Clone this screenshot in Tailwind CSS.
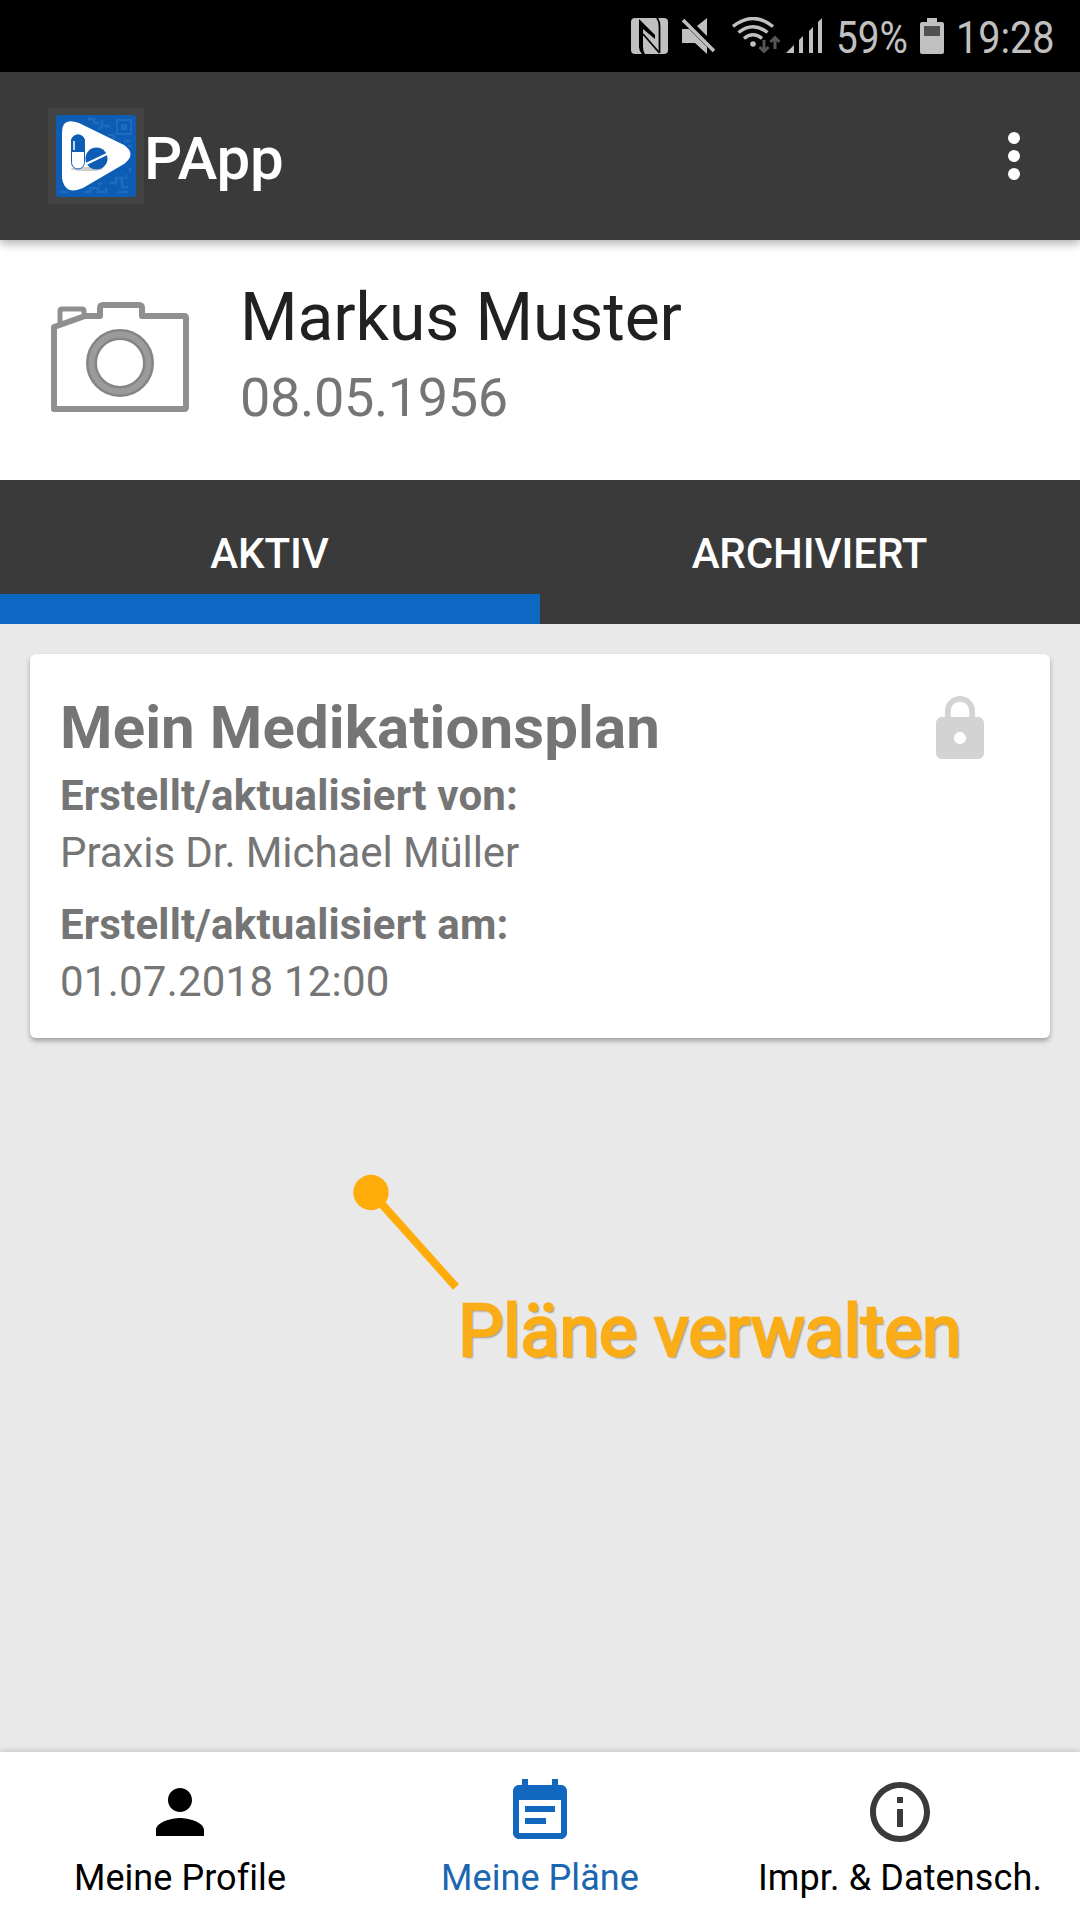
<!DOCTYPE html>
<html lang="de">
<head>
    <meta charset="UTF-8">
    <meta name="viewport" content="width=device-width, initial-scale=1.0">
    <title>PApp</title>

    <!-- Tailwind CSS -->
    <script src="https://cdn.jsdelivr.net/npm/@tailwindcss/browser@4"></script>
</head>
<body class="w-[1080px] h-[1920px] flex flex-col overflow-hidden bg-[#e9e9e9] font-['Roboto',sans-serif]">

    <!-- Status Bar -->
    <div class="h-[72px] shrink-0 bg-black text-[#c0c0c0] flex items-start pl-[631px]">
        <!-- NFC -->
        <svg class="w-[37px] h-9 mt-[18px]" viewBox="0 0 37 36">
            <rect width="37" height="36" rx="4" fill="#c0c0c0"/>
            <path d="M8 1L24 17V21L12 11V29Q12 33 14 36H11Q8 33 8 29Z" fill="#000"/>
            <path d="M12 16L28.500 35M26 0Q28.500 3 28.500 8V35" fill="none" stroke="#000" stroke-width="1.800"/>
        </svg>
        <!-- Mute -->
        <svg class="w-[34px] h-9 mt-[18px] ml-[14px]" viewBox="0 0 34 36">
            <path d="M0 11H7L25 29V36L13 25H0ZM25 0V18L15 8Z" fill="#c0c0c0"/>
            <path d="M1 2L32 33" stroke="#c0c0c0" stroke-width="3.500"/>
        </svg>
        <!-- Wifi -->
        <svg class="w-12 h-9 mt-[17px] ml-4" viewBox="0 0 48 36" fill="none" stroke="#c0c0c0" stroke-width="3.400">
            <path d="M1 9.500Q21-6.500 41 9.500M6.500 15.500Q21 4 35.500 15.500M12 21.500Q21 14 30 21.500"/>
            <circle cx="21" cy="27" r="2.800" fill="#c0c0c0" stroke="none"/>
            <path d="M32 23V34M27.500 30L32 34.500L36.500 30M43 32V21M38.500 25L43 20.500L47.500 25" stroke="#555" stroke-width="3"/>
        </svg>
        <!-- Signal -->
        <svg class="w-9 h-9 mt-[18px] ml-[6px]" viewBox="0 0 36 36" fill="#c0c0c0">
            <path d="M0 35L8 27V35ZM13 22L17 18V35H13ZM23 13L27 9V35H23ZM32 4L36 0V35H32Z"/>
        </svg>
        <span class="w-[70px] ml-[14px] mt-[5px] text-[45px] leading-[65px] origin-left scale-x-[.86] whitespace-nowrap">59%</span>
        <!-- Battery -->
        <svg class="w-6 h-9 mt-[18px] ml-[14px]" viewBox="0 0 24 36">
            <path d="M7 0H17V4H22Q24 4 24 6V34Q24 36 22 36H2Q0 36 0 34V6Q0 4 2 4H7Z" fill="#c0c0c0"/>
            <path d="M4 8H20V18H4Z" fill="#505050"/>
        </svg>
        <span class="ml-[12px] mt-[5px] text-[45px] leading-[65px] origin-left scale-x-[.88] whitespace-nowrap">19:28</span>
    </div>

    <!-- App Bar -->
    <header class="relative h-[168px] shrink-0 bg-[#3a3a3a] flex items-center pl-12 pr-[60px] shadow-[0_3px_10px_rgba(0,0,0,0.35)] z-10">
        <svg class="size-24" viewBox="0 0 96 96">
            <rect width="96" height="96" fill="#434343"/>
            <rect x="8" y="7" width="80" height="82" rx="3" fill="#0d5db5"/>
            <path d="M40 11h6v4h5M54 12v6h8M60 27h6v4M50 20h4M76 33h6M80 38h4M36 84h6v-4h8v4h6M62 75h6v-5h6v9h6M70 84h10M58 80v6M78 67v4M82 60v4M12 84h8M50 76h4" fill="none" stroke="#1f6bbf" stroke-width="2.500"/>
            <rect x="69" y="12" width="14" height="14" fill="none" stroke="#1f6bbf" stroke-width="2"/>
            <rect x="73" y="16" width="6" height="6" fill="#1f6bbf"/>
            <path d="M14 24Q14 9 31 15L76 37Q89 46 76 56L35 80Q17 88 14 70Z" fill="#fff"/>
            <ellipse cx="39" cy="61" rx="16" ry="2" fill="#ccc"/>
            <rect x="23.500" y="27" width="13" height="34" rx="6.500" fill="#fff" stroke="#0d5db5"/>
            <path d="M23 44V33.500a7 7 0 0 1 14 0V44Z" fill="#0d5db5"/>
            <path d="M26 33v9" stroke="#fff" stroke-width="1.500"/>
            <circle cx="48.500" cy="50.500" r="11" fill="#0d5db5"/>
            <path d="M37 56.500L60 45.500" stroke="#fff" stroke-width="2"/>
        </svg>
        <h1 class="text-[60px] leading-[70px] tracking-[-0.3px] font-medium text-white pt-[5px]">PApp</h1>
        <svg class="w-3 h-12 ml-auto" viewBox="0 0 12 48" fill="#fff">
            <circle cx="6" cy="6" r="6"/>
            <circle cx="6" cy="24" r="6"/>
            <circle cx="6" cy="42" r="6"/>
        </svg>
    </header>

    <!-- Profile -->
    <section class="h-60 shrink-0 bg-white flex pl-12">
        <svg class="w-36 h-[116px] mt-[60px]" viewBox="0 0 144 116" fill="none" stroke="#8f8f8f" stroke-width="6" stroke-linejoin="round">
            <path d="M6 109V27L37 16H52V8Q52 5 55 5H91Q94 5 94 8V16H136Q138 16 138 18V107Q138 109 136 109H8Q6 109 6 107Z"/>
            <path d="M12 25V11Q12 9 14 9H34Q36 9 36 11V16" stroke-width="5"/>
            <circle cx="72" cy="63" r="28.500" stroke="#858585" stroke-width="11"/>
            <circle cx="72" cy="63" r="28.500" stroke="#9b9b9b" stroke-width="6"/>
        </svg>
        <div class="flex flex-col ml-12 pt-10">
            <span class="text-[66px] leading-[76px] tracking-[-0.1px] text-[#212121]">Markus Muster</span>
            <span class="text-[54px] leading-[64px] tracking-[-0.35px] mt-[10px] text-[#757575]">08.05.1956</span>
        </div>
    </section>

    <!-- Tabs -->
    <nav class="h-36 shrink-0 grid grid-cols-2 bg-[#3a3a3a] text-white text-[42px] leading-[50px] tracking-[-0.1px] font-medium text-center">
        <div class="pt-[49px] pr-px border-b-[30px] border-[#0d68c4]">AKTIV</div>
        <div class="pt-[49px] pr-px">ARCHIVIERT</div>
    </nav>

    <!-- Plan List -->
    <main class="flex-1 p-[30px]">
        <article class="h-[384px] bg-white rounded-md shadow-[0_3px_5px_rgba(0,0,0,0.3)] flex justify-between pl-[30px] pr-[54px] text-[42px] leading-[57px] text-[#757575]">
            <div class="pt-[38px]">
                <h2 class="text-[60px] leading-[72px] tracking-[0.1px] font-bold">Mein Medikationsplan</h2>
                <p class="font-bold tracking-[0.18px] mt-[3px]">Erstellt/aktualisiert von:</p>
                <p class="tracking-[-0.08px]">Praxis Dr. Michael Müller</p>
                <p class="font-bold tracking-[0.18px] mt-[15px]">Erstellt/aktualisiert am:</p>
                <p class="tracking-[0.23px]">01.07.2018 12:00</p>
            </div>
            <svg class="size-[72px] mt-[39px]" viewBox="0 0 24 24" fill="#d3d3d3">
                <path d="M18 8h-1V6c0-2.760-2.240-5-5-5S7 3.240 7 6v2H6c-1.100 0-2 .9-2 2v10c0 1.100.9 2 2 2h12c1.100 0 2-.9 2-2V10c0-1.100-.9-2-2-2zm-6 9c-1.100 0-2-.9-2-2s.9-2 2-2 2 .9 2 2-.9 2-2 2zm3.100-9H8.900V6c0-1.710 1.390-3.100 3.100-3.100 1.710 0 3.100 1.390 3.100 3.100v2z"/>
            </svg>
        </article>

        <!-- Callout -->
        <div class="mt-[136px] pl-[322px]">
            <svg class="w-[110px] h-[116px]" viewBox="0 0 110 116">
                <circle cx="19" cy="18.500" r="17.700" fill="#ffac0b"/>
                <path d="M19 18L104 113" stroke="#ffac0b" stroke-width="8"/>
            </svg>
            <p class="pl-[106px] text-[72px] leading-[84px] tracking-[-0.3px] [-webkit-text-stroke:2.5px_#fbad18] text-[#fbad18] text-shadow-[2px_2px_2px_rgba(0,0,0,0.35)] whitespace-nowrap">Pläne verwalten</p>
        </div>
    </main>

    <!-- Bottom Navigation -->
    <nav class="h-[168px] shrink-0 grid grid-cols-3 bg-white pt-6 text-[36px] leading-[42px] text-black shadow-[0_-2px_5px_rgba(0,0,0,0.12)]">
        <a class="flex flex-col items-center">
            <svg class="size-[72px]" viewBox="0 0 24 24" fill="#000">
                <path d="M12 12c2.210 0 4-1.790 4-4s-1.790-4-4-4-4 1.790-4 4 1.790 4 4 4zm0 2c-2.670 0-8 1.340-8 4v2h16v-2c0-2.660-5.330-4-8-4z"/>
            </svg>
            <span class="mt-[9px] tracking-[0.06px]">Meine Profile</span>
        </a>
        <a class="flex flex-col items-center text-[#1b66b1]">
            <svg class="size-[72px]" viewBox="0 0 24 24" fill="#1166be">
                <path d="M17 10H7v2h10v-2zm2-7h-1V1h-2v2H8V1H6v2H5c-1.110 0-1.990.9-1.990 2L3 19c0 1.100.89 2 2 2h14c1.100 0 2-.9 2-2V5c0-1.100-.9-2-2-2zm0 16H5V8h14v11zm-5-5H7v2h7v-2z"/>
            </svg>
            <span class="mt-[9px] tracking-[0.06px]">Meine Pläne</span>
        </a>
        <a class="flex flex-col items-center">
            <svg class="size-[72px]" viewBox="0 0 24 24" fill="#3a3a3a">
                <path d="M11 7h2v2h-2zm0 4h2v6h-2zm1-9C6.480 2 2 6.480 2 12s4.480 10 10 10 10-4.480 10-10S17.520 2 12 2zm0 18c-4.410 0-8-3.590-8-8s3.590-8 8-8 8 3.590 8 8-3.590 8-8 8z"/>
            </svg>
            <span class="mt-[9px] tracking-[0.12px]">Impr. &amp; Datensch.</span>
        </a>
    </nav>
</body>
</html>
